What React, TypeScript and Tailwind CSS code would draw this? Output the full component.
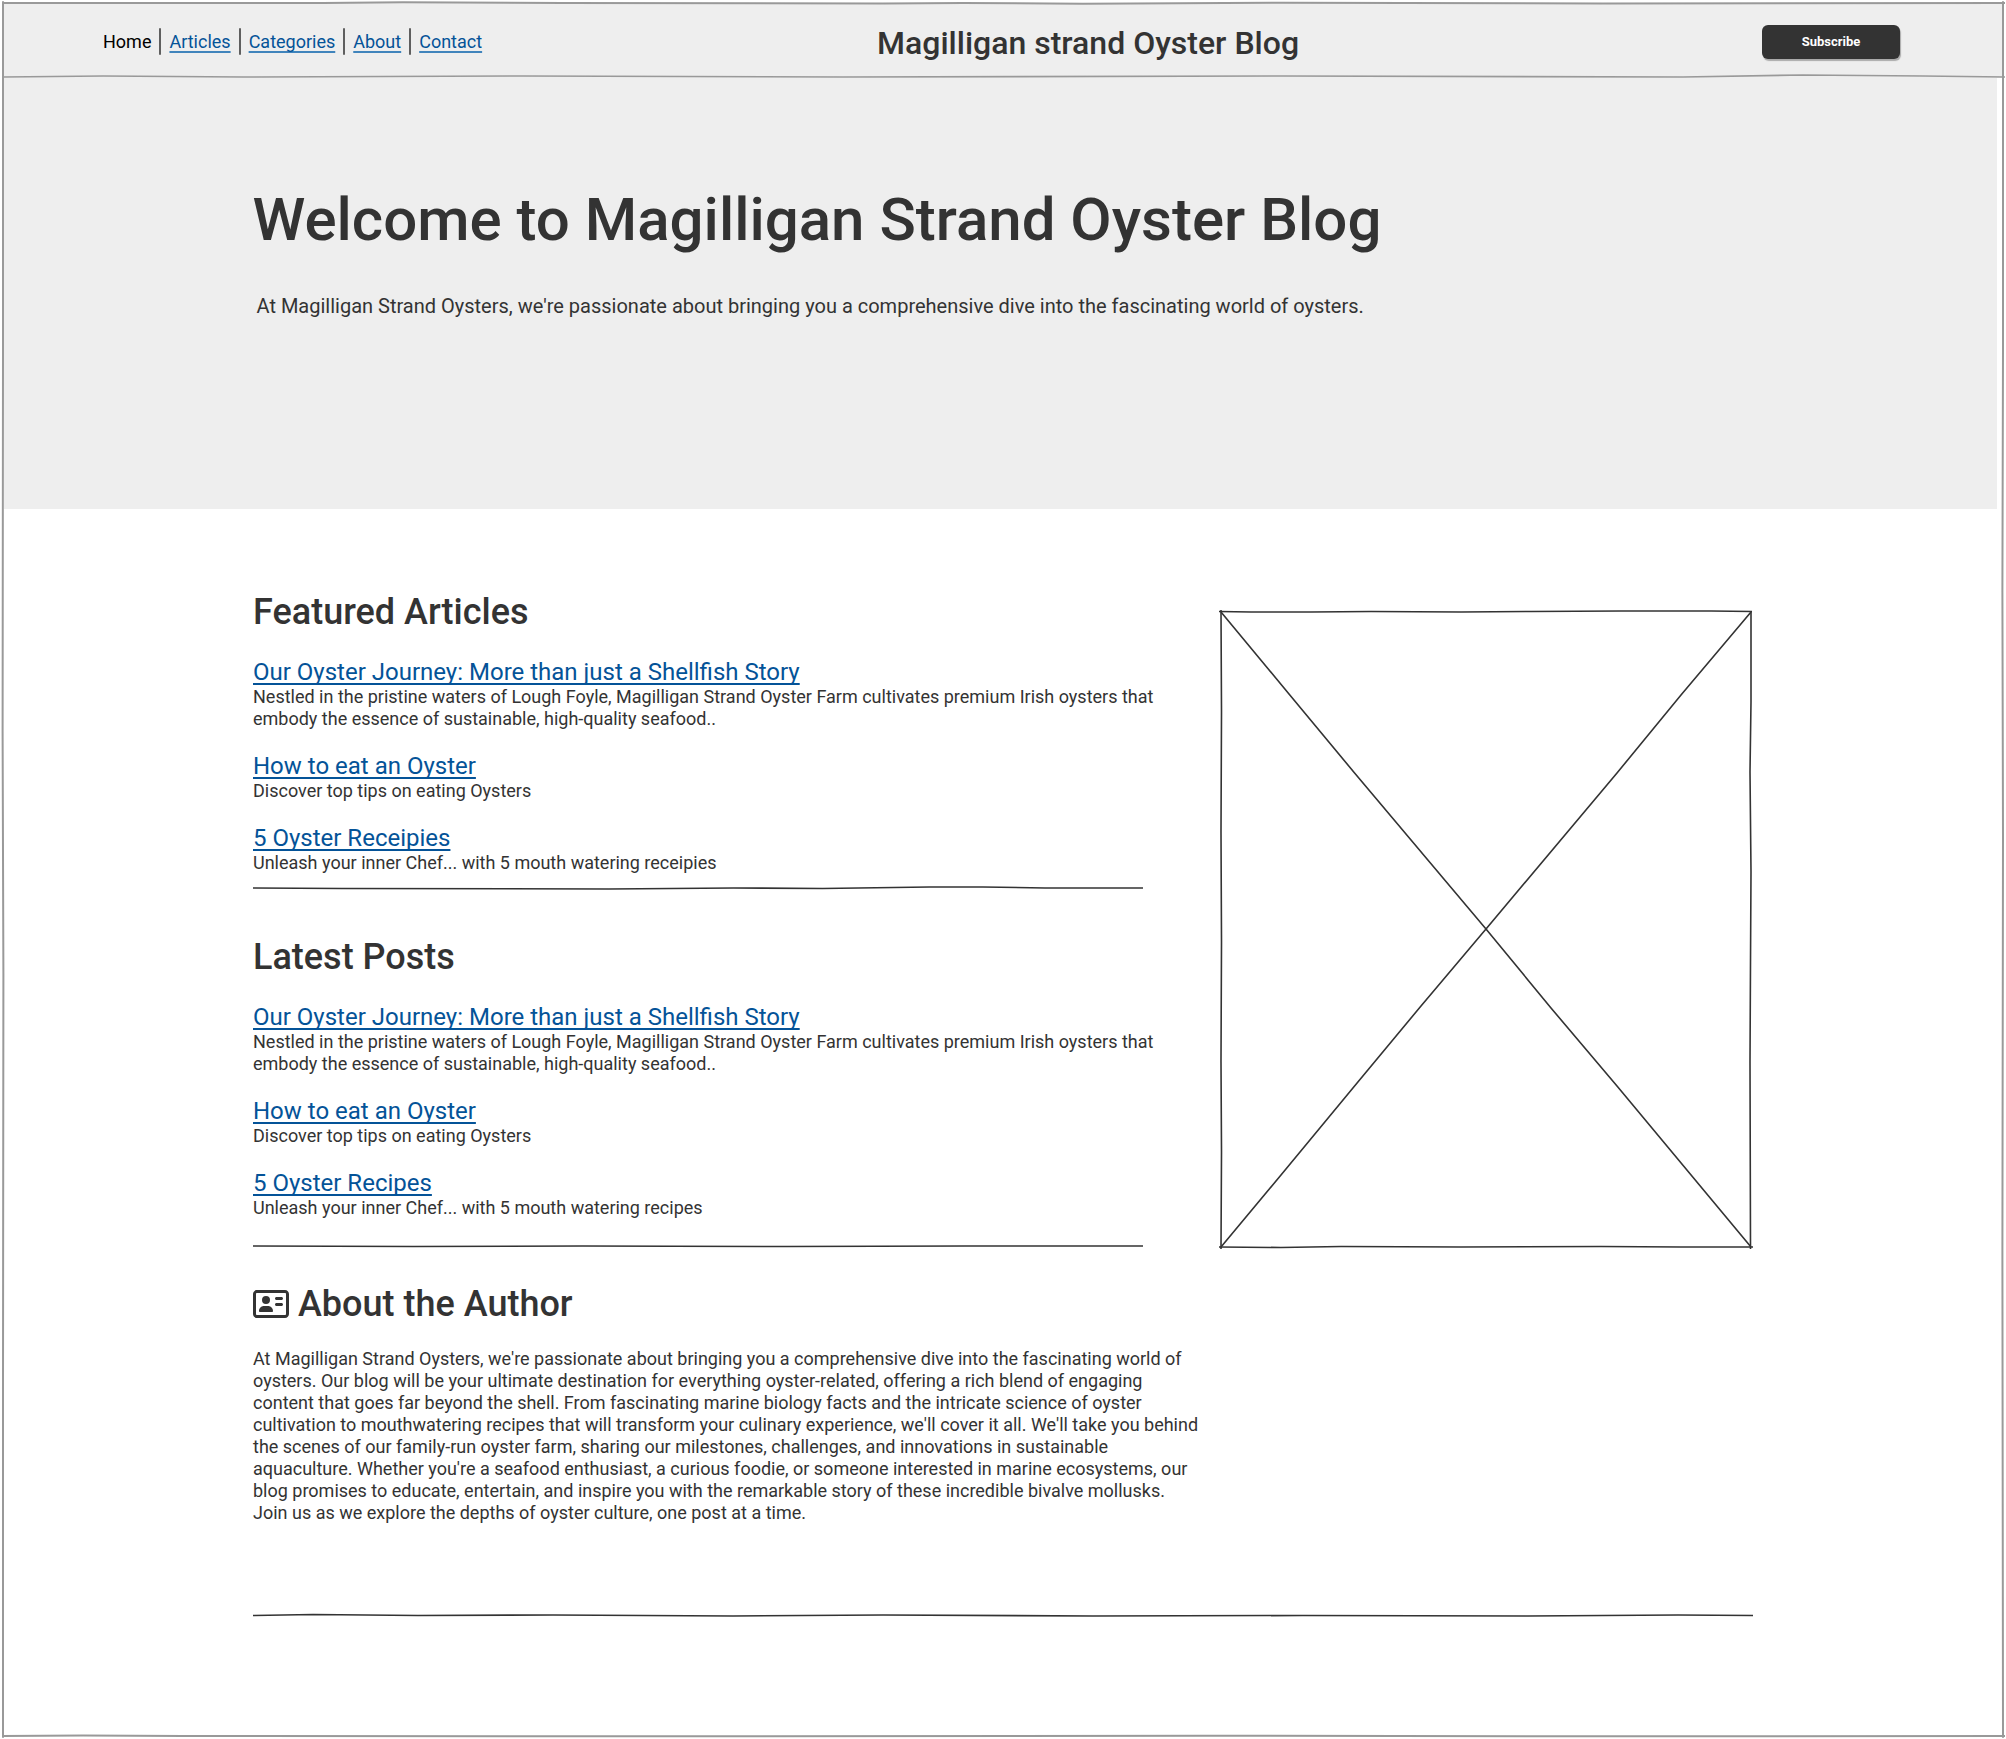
import { Fragment } from "react";
import { FaRegAddressCard } from "react-icons/fa6";

type Article = { title: string; lines: string[] };

const journey: Article = {
  title: "Our Oyster Journey: More than just a Shellfish Story",
  lines: [
    "Nestled in the pristine waters of Lough Foyle, Magilligan Strand Oyster Farm cultivates premium Irish oysters that",
    "embody the essence of sustainable, high-quality seafood..",
  ],
};
const howTo: Article = { title: "How to eat an Oyster", lines: ["Discover top tips on eating Oysters"] };

const featured: Article[] = [
  journey,
  howTo,
  { title: "5 Oyster Receipies", lines: ["Unleash your inner Chef... with 5 mouth watering receipies"] },
];
const latest: Article[] = [
  journey,
  howTo,
  { title: "5 Oyster Recipes", lines: ["Unleash your inner Chef... with 5 mouth watering recipes"] },
];

const about = [
  "At Magilligan Strand Oysters, we're passionate about bringing you a comprehensive dive into the fascinating world of",
  "oysters. Our blog will be your ultimate destination for everything oyster-related, offering a rich blend of engaging",
  "content that goes far beyond the shell. From fascinating marine biology facts and the intricate science of oyster",
  "cultivation to mouthwatering recipes that will transform your culinary experience, we'll cover it all. We'll take you behind",
  "the scenes of our family-run oyster farm, sharing our milestones, challenges, and innovations in sustainable",
  "aquaculture. Whether you're a seafood enthusiast, a curious foodie, or someone interested in marine ecosystems, our",
  "blog promises to educate, entertain, and inspire you with the remarkable story of these incredible bivalve mollusks.",
  "Join us as we explore the depths of oyster culture, one post at a time.",
];

const links = ["Articles", "Categories", "About", "Contact"];

function Lines({ lines }: { lines: string[] }) {
  return (
    <>
      {lines.map((line, i) => (
        <Fragment key={line}>
          {i > 0 && <br />}
          {line}
        </Fragment>
      ))}
    </>
  );
}

/* Horizontal rule with a slight hand-drawn waver */
function SketchRule({ d, className }: { d: string; className: string }) {
  return (
    <svg
      viewBox="0 0 1000 6"
      preserveAspectRatio="none"
      fill="none"
      aria-hidden="true"
      className={`block h-[6px] overflow-visible ${className}`}
    >
      <path d={d} stroke="currentColor" strokeWidth="1.6" vectorEffect="non-scaling-stroke" />
    </svg>
  );
}

function ArticleList({ heading, articles }: { heading: string; articles: Article[] }) {
  return (
    <section>
      <h2 className="text-[36px] leading-[44px] font-medium">{heading}</h2>
      <div className="mt-6 flex flex-col gap-[22px]">
        {articles.map((a) => (
          <article key={a.title}>
            <h3 className="text-2xl leading-[28px]">
              <a href="#" className="text-[#045398] underline decoration-2 underline-offset-[3px] [text-decoration-skip-ink:none]">
                {a.title}
              </a>
            </h3>
            <p className="text-lg leading-[22px] whitespace-nowrap">
              <Lines lines={a.lines} />
            </p>
          </article>
        ))}
      </div>
    </section>
  );
}

function ImagePlaceholder() {
  return (
    <svg
      viewBox="0 0 530 635"
      fill="none"
      role="img"
      aria-label="Image placeholder"
      className="mt-[22px] block w-full overflow-visible text-[#333333]"
    >
      <g stroke="currentColor" strokeWidth="1.6">
        <path d="M-2 -.5 L30 0 L90 0 L150 -.5 L240 0 L310 -.5 L400 -1 L490 -1 L531 -.5" />
        <path d="M0 -2 L.5 100 L0 220 L.5 330 L0 450 L.5 540 L0 637" />
        <path d="M530 -1 L530 90 L529 160 L530 260 L529.500 350 L529 450 L529.500 637" />
        <path d="M-2 635 L60 635.500 L120 634.500 L240 635 L380 634.500 L460 635 L532 635" />
        <path d="M0 0 L68 82 L134 161.500 L265 317 L330 396 L396 474 L530 635" />
        <path d="M530 0 L460 83 L396 161 L265 317 L200 394 L134 473.500 L60 563 L0 635" />
      </g>
    </svg>
  );
}

function PageFrame() {
  return (
    <div className="pointer-events-none absolute inset-[3px]">
      <svg viewBox="0 0 1000 1000" preserveAspectRatio="none" fill="none" aria-hidden="true" className="block h-full w-full overflow-visible text-[#999999]">
        <g stroke="currentColor" strokeWidth="2">
          <path vectorEffect="non-scaling-stroke" d="M-.5 0 L160 0 L200 -.5 L280 0 L440 .3 L480 0 L540 .4 L640 -.2 L800 .3 L1001 0" />
          <path vectorEffect="non-scaling-stroke" d="M0 -1 L0 200 L-.2 420 L.2 560 L0 800 L0 1001" />
          <path vectorEffect="non-scaling-stroke" d="M1000 -1 L1000 200 L999.700 340 L1000 480 L999.700 720 L1000 1001" />
          <path vectorEffect="non-scaling-stroke" d="M-.5 1000 L40 999.700 L90 1000 L320 1000.200 L600 999.800 L820 1000.200 L1001 1000" />
        </g>
      </svg>
    </div>
  );
}

export default function App() {
  return (
    <div className="relative min-h-screen bg-white p-[3px] pb-[121px] font-[Roboto,'Liberation_Sans',sans-serif] text-[#333333]">
      <header className="bg-[#eeeeee]">
        <div className="flex h-[69px] items-center pt-[9px] pr-[103px] pl-[100px]">
          <nav aria-label="Main" className="flex items-center gap-2 pb-[2px] text-lg leading-[27px]">
            <a href="#" aria-current="page" className="text-black">
              Home
            </a>
            {links.map((l) => (
              <Fragment key={l}>
                <span aria-hidden="true" className="h-[27px] w-[2px] rounded-full bg-[#5f5f5f]" />
                <a href="#" className="text-[#045398] underline decoration-[#4084bc] decoration-2 underline-offset-[3px] [text-decoration-skip-ink:none]">
                  {l}
                </a>
              </Fragment>
            ))}
          </nav>
          <p className="flex-1 pt-[2px] pr-[68px] text-center text-[32px] leading-[40px] font-medium whitespace-nowrap">
            Magilligan strand Oyster Blog
          </p>
          <button
            type="button"
            className="h-[34px] w-[138px] rounded-md bg-[#333333] text-[13px] font-bold text-white shadow-[1px_2px_1px_#aaaaaa]"
          >
            Subscribe
          </button>
        </div>
        <SketchRule
          className="h-[3px] w-full text-[#999999]"
          d="M0 5 L50 4 L120 5 L260 4 L420 5 L640 4 L840 5 L900 3 L960 4 L1001 5"
        />
      </header>

      <div className="mr-[6px] ml-px bg-[#eeeeee] pt-[106px] pb-[191px]">
        <div className="mx-auto max-w-[1500px] pl-0.5">
          <h1 className="text-6xl leading-[72px] font-medium">Welcome to Magilligan Strand Oyster Blog</h1>
          <p className="mt-[38px] pl-1 text-xl leading-[24px]">
            At Magilligan Strand Oysters, we're passionate about bringing you a comprehensive dive into the fascinating world of oysters.
          </p>
        </div>
      </div>

      <main className="mx-auto max-w-[1500px] pt-[81px]">
        <div className="grid grid-cols-[minmax(0,1fr)_530px] items-start gap-[14px] pr-[2px]">
          <div>
            <ArticleList heading="Featured Articles" articles={featured} />
            <SketchRule
              className="mt-[11px] mb-11 w-[890px] max-w-full"
              d="M0 3 L100 3.500 L400 4 L540 3 L640 3.500 L760 2 L820 2 L890 3 L1000 3"
            />
            <ArticleList heading="Latest Posts" articles={latest} />
            <SketchRule
              className="mt-6 mb-[33px] w-[890px] max-w-full"
              d="M0 3 L180 3.500 L370 3 L600 3.500 L800 3 L1000 3"
            />
            <section>
              <h2 className="flex items-center gap-[9px] text-[36px] leading-[44px] font-medium">
                <FaRegAddressCard aria-hidden="true" className="h-8 w-9" />
                About the Author
              </h2>
              <p className="mt-[22px] text-lg leading-[22px] whitespace-nowrap">
                <Lines lines={about} />
              </p>
            </section>
          </div>
          <ImagePlaceholder />
        </div>
        <SketchRule
          className="mt-[88px] w-full"
          d="M0 3.500 L40 2.500 L110 3.500 L200 3 L320 4 L420 3 L560 4 L700 3.500 L850 4 L950 3 L1000 3.500"
        />
      </main>
      <PageFrame />
    </div>
  );
}
